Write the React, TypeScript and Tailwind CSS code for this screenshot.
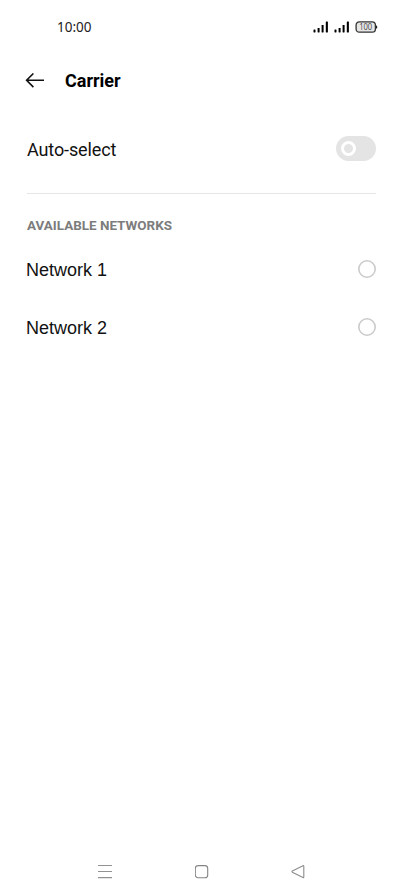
import { useState } from "react";

function Signal() {
  return (
    <svg width="15" height="12" viewBox="0 0 15 12" fill="#000">
      <rect x=".5" y="8.5" width="2" height="3" rx=".4" />
      <rect x="4.6" y="7" width="2" height="4.5" rx=".4" />
      <rect x="8.6" y="4" width="2" height="7.5" rx=".4" />
      <rect x="12.8" y="0.5" width="2.1" height="11" rx=".4" />
    </svg>
  );
}

function StatusBar() {
  return (
    <div className="flex h-[54px] items-center justify-between pl-[57px] pr-[25px]">
      <span className="font-['Noto_Sans',sans-serif] text-[13.5px] leading-5 text-[#222]">10:00</span>
      <div className="flex items-center">
        <Signal />
        <span className="w-[6px]" />
        <Signal />
        <span className="w-[6px]" />
        <svg width="23" height="12" viewBox="0 0 23 12">
          <rect x="1.1" y=".8" width="19.3" height="10.4" rx="3.2" fill="#e6e6e6" stroke="#333" strokeWidth="1.3" />
          <path d="M21 4.2q1.3 .4 1.3 1.8t-1.3 1.8z" fill="#222" />
          <text x="10.7" y="9" textAnchor="middle" fontSize="8.6" textLength="13" lengthAdjust="spacingAndGlyphs" fontFamily="'Open Sans', sans-serif" fill="#444">100</text>
        </svg>
      </div>
    </div>
  );
}

function NetworkRow({ name, selected, onSelect }: { name: string; selected: boolean; onSelect: () => void }) {
  return (
    <button onClick={onSelect} className="flex h-[58px] w-full items-center justify-between pl-[26px] pr-[27px]">
      <span className="pt-px font-['Liberation_Sans',Arial,sans-serif] text-[18px] leading-6 text-[#111]">{name}</span>
      <svg width="18" height="18" viewBox="0 0 18 18" fill="none" stroke={selected ? "#111" : "#cbcbcb"} strokeWidth="1.6">
        <circle cx="9" cy="9" r="8.2" />
      </svg>
    </button>
  );
}

export default function App() {
  const [network, setNetwork] = useState("");
  return (
    <div className="flex h-[896px] w-[403px] flex-col bg-white font-[Roboto,sans-serif]">
      <StatusBar />
      <header className="flex h-[53px] items-center pl-[25px]">
        <svg width="20" height="16" viewBox="0 0 20 16" fill="none" stroke="#111" strokeWidth="1.6">
          <path d="M8.4 .5 1.6 7.3l6.8 6.8M1.8 7.3H19" />
        </svg>
        <h1 className="ml-5 text-[18px] font-bold leading-6 text-black">Carrier</h1>
      </header>
      <div className="mx-[27px] flex h-[87px] items-center justify-between border-b border-[#e6e6e6]">
        <span className="text-[18px] leading-6 tracking-[-0.12px] text-[#111]">Auto-select</span>
        <span className="mb-[3px] flex h-[25px] w-10 items-center rounded-full bg-[#e4e4e4] pl-[5px]">
          <span className="size-[15px] rounded-full border-[3px] border-white" />
        </span>
      </div>
      <h2 className="mt-[22px] h-[24px] pl-[27px] text-[13.45px] font-bold leading-5 text-[#7c7c7c]">AVAILABLE NETWORKS</h2>
      {["Network 1", "Network 2"].map((n) => (
        <NetworkRow key={n} name={n} selected={network === n} onSelect={() => setNetwork(n)} />
      ))}
      <nav className="mt-auto flex h-[49px] items-center justify-between pl-[98px] pr-[98px]">
        <svg width="14" height="14" viewBox="0 0 14 14" stroke="#929292" strokeWidth="1.1">
          <path d="M0 .5h14M0 6.5h14M0 12.6h14" />
        </svg>
        <svg width="14" height="14" viewBox="0 0 14 14" fill="none" stroke="#858585" strokeWidth="1.1">
          <rect x=".3" y=".6" width="12.4" height="12.2" rx="2.8" />
        </svg>
        <svg width="14" height="14" viewBox="0 0 14 14" fill="none" stroke="#8c8c8c" strokeWidth="1.1" strokeLinejoin="round">
          <path d="M12 .7Q12.8.4 12.8 1.3v10.6q0 .9-.8.6L1.3 7.2q-.7-.6 0-1.2z" />
        </svg>
      </nav>
    </div>
  );
}
